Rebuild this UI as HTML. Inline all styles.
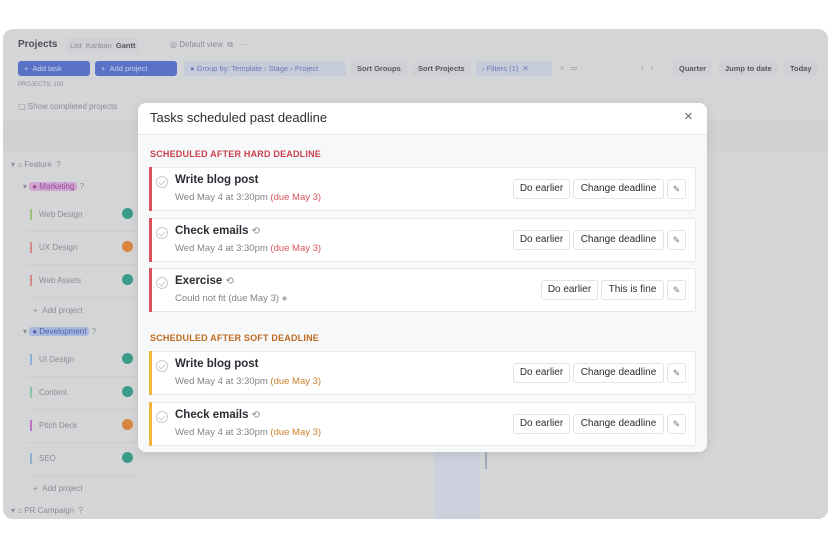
<!DOCTYPE html>
<html><head><meta charset="utf-8"><style>
*{box-sizing:border-box;margin:0;padding:0}
body{width:830px;height:546px;background:#fff;font-family:"Liberation Sans",sans-serif;position:relative;overflow:hidden}
.abs{position:absolute}
#app{left:3px;top:29px;width:825px;height:490px;background:#d4d5d7;border-radius:10px;overflow:hidden}
.t{position:absolute;font-size:8px;color:#8a8d93;white-space:nowrap}
.btn{position:absolute;height:15px;border-radius:3px;font-size:7.5px;line-height:15px;padding:0 6px;white-space:nowrap}
.blue{background:#5a72c6;color:#c9d2ee}
.lb{background:#c6cbd9;color:#6a7bb8}
.gb{background:#cfd0d3;color:#55585e;font-weight:bold}
.side{left:0;top:122px;width:140px;height:368px;background:#d4d5d7}
.row{position:absolute;left:22px;width:118px;height:33px;border-bottom:1px solid #cdced1}
.bar{position:absolute;left:5px;top:10px;width:2px;height:11px}
.dot{position:absolute;left:97px;top:9px;width:11px;height:11px;border-radius:50%}
#modal{left:138px;top:103px;width:569px;height:349px;background:#f7f8fa;border-radius:8px;overflow:hidden;box-shadow:0 2px 10px rgba(0,0,0,.1)}
#mh{position:absolute;left:0;top:0;width:569px;height:32px;background:#fff;border-bottom:1px solid #e6e8eb}
#mh span{position:absolute;left:12px;top:7px;font-size:13px;color:#2a2d33}
.sec{position:absolute;left:12px;font-size:9px;font-weight:bold;letter-spacing:.2px}
.card{position:absolute;left:11px;width:547px;height:44px;background:#fff;border:1px solid #e6e8eb;border-radius:3px}
.card .lbar{position:absolute;left:-1px;top:-1px;width:3px;height:44px}
.chk{position:absolute;left:6px;top:8px;width:12px;height:12px;border:1px solid #c8cacf;border-radius:50%}
.chk:after{content:"";position:absolute;left:3px;top:2px;width:3px;height:5px;border:solid #c8cacf;border-width:0 1px 1px 0;transform:rotate(45deg)}
.ttl{position:absolute;left:25px;top:6px;font-size:11.5px;font-weight:bold;color:#2a2d33}
.sub{position:absolute;left:25px;top:24px;font-size:9.5px;color:#80848b}
.rep{font-weight:normal;color:#8a8d93;font-size:10px;margin-left:3px}
.b{position:absolute;top:11px;height:20px;border:1px solid #e1e3e6;border-radius:3px;font-size:10px;line-height:18px;text-align:center;color:#2a2d33;background:#fff;white-space:nowrap}
.pen{position:absolute;top:11px;width:19px;height:20px;border:1px solid #e1e3e6;border-radius:3px;font-size:9px;line-height:18px;text-align:center;color:#777}
</style></head><body>
<div id="app" class="abs">
 <div class="t" style="left:15px;top:10px;font-size:10px;font-weight:bold;color:#4d5057">Projects</div>
 <div class="btn" style="left:63px;top:9px;background:#cfd0d3;color:#8a8d93;padding:0 4px">List &nbsp;Kanban &nbsp;<b style="color:#55585e">Gantt</b></div>
 <div class="t" style="left:167px;top:11px">◎ Default view &nbsp;⧉ &nbsp; ···</div>
 <div class="btn blue" style="left:15px;top:32px;width:72px">+ &nbsp;Add task</div>
 <div class="btn blue" style="left:92px;top:32px;width:82px">+ &nbsp;Add project</div>
 <div class="btn lb" style="left:181px;top:32px;width:162px">● Group by: Template › Stage › Project</div>
 <div class="btn gb" style="left:348px;top:32px">Sort Groups</div>
 <div class="btn gb" style="left:409px;top:32px">Sort Projects</div>
 <div class="btn lb" style="left:473px;top:32px;width:76px">› Filters (1) &nbsp;✕</div>
 <div class="t" style="left:557px;top:34px">⌕ &nbsp; ▭</div>
 <div class="t" style="left:638px;top:34px">‹ &nbsp; ›</div>
 <div class="btn gb" style="left:670px;top:32px">Quarter</div>
 <div class="btn gb" style="left:716px;top:32px">Jump to date</div>
 <div class="btn gb" style="left:781px;top:32px">Today</div>
 <div class="t" style="left:15px;top:53px;font-size:6px">PROJECTS: 100</div>
 <div class="t" style="left:15px;top:73px">▢ Show completed projects</div>
 <div class="abs" style="left:0;top:92px;width:825px;height:30px;background:#d0d1d3"></div>
 <div class="abs side">
  <div class="t" style="left:8px;top:9px">▾ ⌂ Feature &nbsp;?</div>
  <div class="t" style="left:20px;top:31px">▾ <span style="background:#cfa6cf;color:#9a4a9a;border-radius:3px;padding:0 3px">● Marketing</span> ?</div>
  <div class="row" style="top:48px"><div class="bar" style="background:#9cc27a"></div><div class="t" style="left:14px;top:11px">Web Design</div><div class="dot" style="background:#3a9c88"></div></div>
  <div class="row" style="top:81px"><div class="bar" style="background:#d58a8a"></div><div class="t" style="left:14px;top:11px">UX Design</div><div class="dot" style="background:#d9843e"></div></div>
  <div class="row" style="top:114px"><div class="bar" style="background:#d58a8a"></div><div class="t" style="left:14px;top:11px">Web Assets</div><div class="dot" style="background:#3a9c88"></div></div>
  <div class="t" style="left:30px;top:155px">+ &nbsp;Add project</div>
  <div class="t" style="left:20px;top:176px">▾ <span style="background:#a9b8dc;color:#4a63b0;border-radius:3px;padding:0 3px">● Development</span> ?</div>
  <div class="row" style="top:193px"><div class="bar" style="background:#8fb0d0"></div><div class="t" style="left:14px;top:11px">UI Design</div><div class="dot" style="background:#3a9c88"></div></div>
  <div class="row" style="top:226px"><div class="bar" style="background:#8cc4a8"></div><div class="t" style="left:14px;top:11px">Content</div><div class="dot" style="background:#3a9c88"></div></div>
  <div class="row" style="top:259px"><div class="bar" style="background:#c070c0"></div><div class="t" style="left:14px;top:11px">Pitch Deck</div><div class="dot" style="background:#d9843e"></div></div>
  <div class="row" style="top:292px"><div class="bar" style="background:#8fb0d0"></div><div class="t" style="left:14px;top:11px">SEO</div><div class="dot" style="background:#3a9c88"></div></div>
  <div class="t" style="left:30px;top:333px">+ &nbsp;Add project</div>
  <div class="t" style="left:8px;top:355px">▾ ⌂ PR Campaign &nbsp;?</div>
 </div>
 <div class="abs" style="left:432px;top:422px;width:45px;height:68px;background:#cbd0dc"></div>
 <div class="abs" style="left:482px;top:422px;width:2px;height:18px;background:#a0a8bf"></div>
</div>
<div id="modal" class="abs">
 <div id="mh"><span>Tasks scheduled past deadline</span><div class="abs" style="left:546px;top:5px;font-size:15px;color:#666">×</div></div>
 <div class="sec" style="top:46px;color:#c8424c">SCHEDULED AFTER HARD DEADLINE</div>
 <div class="card" style="top:64px"><div class="lbar" style="background:#d9535c"></div><div class="chk"></div><div class="ttl">Write blog post</div><div class="sub">Wed May 4 at 3:30pm <span style="color:#d9535c">(due May 3)</span></div><div class="b" style="left:363px;width:57px">Do earlier</div><div class="b" style="left:423px;width:91px">Change deadline</div><div class="pen" style="left:517px">✎</div></div>
 <div class="card" style="top:115px"><div class="lbar" style="background:#d9535c"></div><div class="chk"></div><div class="ttl">Check emails<span class="rep">⟲</span></div><div class="sub">Wed May 4 at 3:30pm <span style="color:#d9535c">(due May 3)</span></div><div class="b" style="left:363px;width:57px">Do earlier</div><div class="b" style="left:423px;width:91px">Change deadline</div><div class="pen" style="left:517px">✎</div></div>
 <div class="card" style="top:165px"><div class="lbar" style="background:#d9535c"></div><div class="chk"></div><div class="ttl">Exercise<span class="rep">⟲</span></div><div class="sub">Could not fit (due May 3) <span style="color:#aaa">●</span></div><div class="b" style="left:391px;width:57px">Do earlier</div><div class="b" style="left:451px;width:63px">This is fine</div><div class="pen" style="left:517px">✎</div></div>
 <div class="sec" style="top:230px;color:#c06a1e">SCHEDULED AFTER SOFT DEADLINE</div>
 <div class="card" style="top:248px"><div class="lbar" style="background:#f0b43a"></div><div class="chk"></div><div class="ttl">Write blog post</div><div class="sub">Wed May 4 at 3:30pm <span style="color:#c8822e">(due May 3)</span></div><div class="b" style="left:363px;width:57px">Do earlier</div><div class="b" style="left:423px;width:91px">Change deadline</div><div class="pen" style="left:517px">✎</div></div>
 <div class="card" style="top:299px"><div class="lbar" style="background:#f0b43a"></div><div class="chk"></div><div class="ttl">Check emails<span class="rep">⟲</span></div><div class="sub">Wed May 4 at 3:30pm <span style="color:#c8822e">(due May 3)</span></div><div class="b" style="left:363px;width:57px">Do earlier</div><div class="b" style="left:423px;width:91px">Change deadline</div><div class="pen" style="left:517px">✎</div></div>
</div>
</body></html>
